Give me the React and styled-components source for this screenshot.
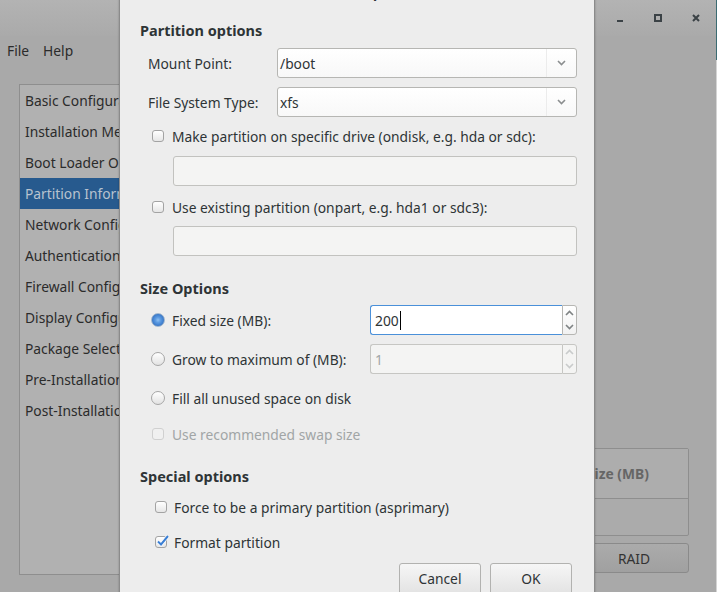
import React from 'react';
import styled, { createGlobalStyle } from 'styled-components';

const GlobalStyle = createGlobalStyle`
  html, body {
    margin: 0;
    padding: 0;
  }
  body {
    font-family: "Noto Sans", "DejaVu Sans", sans-serif;
    font-size: 13.8px;
    color: #2e3436;
  }
`;

const Screen = styled.div`
  position: relative;
  width: 717px;
  height: 592px;
  overflow: hidden;
  display: flex;
  background: #dcdcdc;
`;

const MainWindow = styled.div`
  width: 716px;
  height: 100%;
  display: flex;
  flex-direction: column;
  background: #a9a9a9;
  color: #2b2b2b;
`;

const DesktopEdge = styled.div`
  flex: 1;
  background: linear-gradient(#3b6b72 0, #3b6b72 60px, #d4d4d4 60px);
`;

const TitleBar = styled.div`
  height: 36px;
  display: flex;
  justify-content: flex-end;
  padding-right: 1px;
  background: linear-gradient(#b3b3b3, #aaaaaa);
`;

const WinControl = styled.div`
  width: 38px;
  height: 36px;
  display: flex;
  align-items: center;
  justify-content: center;
  svg {
    display: block;
  }
`;

const MenuBar = styled.div`
  height: 30px;
  display: flex;
  align-items: center;
`;

const MenuItem = styled.span`
  padding: 0 7px;
  line-height: 30px;
`;

const Body = styled.div`
  flex: 1;
  display: flex;
  gap: 12px;
  padding: 18px 27px 17px 19px;
  min-height: 0;
`;

const Sidebar = styled.div`
  width: 102px;
  border: 1px solid #8e8e8e;
  border-right: none;
  background: #b1b1b1;
  display: flex;
  flex-direction: column;
  overflow: hidden;
`;

const SideItem = styled.div`
  height: 31px;
  line-height: 31px;
  padding-left: 5px;
  white-space: nowrap;
  overflow: hidden;
  background: ${p => (p.$active ? '#275a8e' : 'transparent')};
  color: ${p => (p.$active ? '#b8c3d0' : '#2b2b2b')};
`;

const MainPane = styled.div`
  flex: 1;
  display: flex;
  flex-direction: column;
  justify-content: flex-end;
  padding-bottom: 2px;
`;

const Table = styled.div`
  border: 1px solid #8e8e8e;
  border-radius: 2px;
  background: #ababab;
`;

const TableHead = styled.div`
  height: 49px;
  display: grid;
  grid-template-columns: 1fr 1fr 80px 80px 110px;
  border-bottom: 1px solid #8e8e8e;
  background: #adadad;
`;

const HeadCell = styled.div`
  display: flex;
  align-items: center;
  padding-left: 9px;
  font-weight: bold;
  color: #666666;
  white-space: nowrap;
  overflow: hidden;
`;

const TableRow = styled.div`
  height: 36px;
`;

const ButtonRow = styled.div`
  display: flex;
  justify-content: flex-end;
  margin-top: 7px;
`;

const DimButton = styled.div`
  width: 110px;
  height: 30px;
  box-sizing: border-box;
  border: 1px solid #8a8a8a;
  border-radius: 3px;
  background: linear-gradient(#ababab, #a0a0a0);
  display: flex;
  align-items: center;
  justify-content: center;
  color: #333333;
`;

/* dialog */

const Dialog = styled.div`
  position: absolute;
  left: 119px;
  top: -24px;
  width: 476px;
  height: 640px;
  box-sizing: border-box;
  border-left: 1px solid #8b8b8b;
  border-right: 1px solid #8b8b8b;
  background: #ededed;
  box-shadow: 0 0 2px rgba(0, 0, 0, 0.25);
  display: flex;
  flex-direction: column;
`;

const DialogTitle = styled.div`
  height: 24px;
  display: flex;
  align-items: flex-end;
  justify-content: center;
  font-weight: bold;
  line-height: 1;
  color: #2e3436;
`;

const DialogBody = styled.div`
  display: flex;
  flex-direction: column;
  padding: 21px 17px 0 20px;
`;

const Heading = styled.div`
  font-weight: bold;
  font-size: 14.5px;
  line-height: 18px;
  margin-top: ${p => p.$gap || 0}px;
`;

const FieldRow = styled.div`
  display: grid;
  grid-template-columns: 129px 1fr;
  align-items: center;
  padding-left: 8px;
  margin-top: ${p => p.$gap || 0}px;
`;

const Label = styled.span`
  white-space: nowrap;
  color: ${p => (p.$disabled ? '#a1a5a6' : '#2e3436')};
`;

const Combo = styled.div`
  height: 30px;
  box-sizing: border-box;
  border: 1px solid #b6b6b3;
  border-radius: 3px;
  background: linear-gradient(#ffffff, #f8f8f8);
  display: flex;
  align-items: center;
`;

const ComboText = styled.span`
  flex: 1;
  padding-left: 2px;
`;

const ComboArrow = styled.div`
  width: 29px;
  height: 100%;
  border-left: 1px solid #ececec;
  display: flex;
  align-items: center;
  justify-content: center;
`;

const CheckRow = styled.div`
  display: flex;
  align-items: center;
  gap: ${p => p.$labelGap || 8}px;
  height: 18px;
  padding-left: ${p => p.$indent || 12}px;
  margin-top: ${p => p.$gap || 0}px;
`;

const Box = styled.div`
  position: relative;
  width: 12px;
  height: 12px;
  box-sizing: border-box;
  border: 1px solid ${p => (p.$disabled ? '#d0d0d0' : '#a3a3a3')};
  border-radius: 3px;
  background: ${p => (p.$disabled ? '#f0f0f0' : 'linear-gradient(#ffffff, #e6e6e6)')};
  flex: none;
  svg {
    position: absolute;
    left: 0;
    top: -3px;
  }
`;

const Entry = styled.div`
  height: 30px;
  box-sizing: border-box;
  margin-left: 33px;
  margin-top: ${p => p.$gap || 0}px;
  border: 1px solid #c2c2bf;
  border-radius: 3px;
  background: #f4f4f3;
`;

const RadioRow = styled.div`
  display: grid;
  grid-template-columns: 230px 1fr;
  align-items: center;
  height: 30px;
  margin-top: ${p => p.$gap || 0}px;
`;

const RadioLabel = styled.div`
  display: flex;
  align-items: center;
  gap: 7px;
  padding-left: 11px;
`;

const Radio = styled.div`
  width: 14px;
  height: 14px;
  box-sizing: border-box;
  border-radius: 50%;
  flex: none;
  border: 1px solid ${p => (p.$checked ? '#9fb6cf' : '#a6a6a6')};
  background: ${p =>
    p.$checked
      ? 'radial-gradient(circle at 50% 50%, #8fc0f2 0, #5e9ce2 30%, #3f7fcf 62%, #3169b2 80%, #c9d2dc 100%)'
      : 'linear-gradient(#ffffff, #e2e2e2)'};
`;

const Spin = styled.div`
  display: flex;
  height: 30px;
`;

const SpinInput = styled.div`
  flex: 1;
  box-sizing: border-box;
  display: flex;
  align-items: center;
  padding-left: 4px;
  border: 1px solid ${p => (p.$focused ? '#4a90d9' : '#c6c6c3')};
  border-right: none;
  border-radius: 3px 0 0 3px;
  background: ${p => (p.$disabled ? '#f4f4f3' : '#ffffff')};
  color: ${p => (p.$disabled ? '#a1a5a6' : '#2e3436')};
`;

const Caret = styled.span`
  display: inline-block;
  width: 1px;
  height: 19px;
  margin-left: 1px;
  background: #000000;
`;

const SpinButtons = styled.div`
  width: 15px;
  box-sizing: border-box;
  border: 1px solid ${p => (p.$disabled ? '#c6c6c3' : '#b6b6b3')};
  border-radius: 0 3px 3px 0;
  background: ${p => (p.$disabled ? '#f4f4f3' : 'linear-gradient(#ffffff, #f2f2f2)')};
  display: flex;
  flex-direction: column;
  align-items: center;
  justify-content: space-around;
`;

const Footer = styled.div`
  display: flex;
  justify-content: flex-end;
  gap: 9px;
  padding-right: 5px;
  margin-top: 12px;
`;

const DialogButton = styled.button`
  width: 82px;
  height: 33px;
  border: 1px solid #b2b2b0;
  border-radius: 3px;
  background: linear-gradient(#f6f6f6, #e2e2e2);
  font: inherit;
  color: #2e3436;
  padding: 0 0 2px;
`;

const Chevron = ({ up, color = '#8b8e8f' }) => (
  <svg width="9" height="6" viewBox="0 0 9 6">
    <path
      d={up ? 'M1 5 L4.5 1.5 L8 5' : 'M1 1 L4.5 4.5 L8 1'}
      fill="none"
      stroke={color}
      strokeWidth="1.6"
    />
  </svg>
);

const Check = ({ label, checked, disabled, indent, labelGap, gap }) => (
  <CheckRow $indent={indent} $labelGap={labelGap} $gap={gap}>
    <Box $disabled={disabled}>
      {checked && (
        <svg width="14" height="13" viewBox="0 0 14 13">
          <path d="M2 7.5 L5 10.5 L12 2" fill="none" stroke="#ffffff" strokeWidth="3.4" />
          <path d="M2 7.5 L5 10.5 L12 2" fill="none" stroke="#3b7fd4" strokeWidth="2" />
        </svg>
      )}
    </Box>
    <Label $disabled={disabled}>{label}</Label>
  </CheckRow>
);

const sideItems = [
  'Basic Configuration',
  'Installation Method',
  'Boot Loader Options',
  'Partition Information',
  'Network Configuration',
  'Authentication',
  'Firewall Configuration',
  'Display Configuration',
  'Package Selection',
  'Pre-Installation Script',
  'Post-Installation Script',
];

export default function App() {
  return (
    <>
      <GlobalStyle />
      <Screen>
        <MainWindow>
          <TitleBar>
            <WinControl>
              <svg width="8" height="8" viewBox="0 0 8 8">
                <rect x="1" y="6" width="6" height="2" fill="#3b4246" />
              </svg>
            </WinControl>
            <WinControl>
              <svg width="8" height="8" viewBox="0 0 8 8">
                <rect x="1" y="1" width="6" height="6" fill="none" stroke="#3b4246" strokeWidth="2" />
              </svg>
            </WinControl>
            <WinControl>
              <svg width="8" height="8" viewBox="0 0 8 8">
                <path d="M1 1 L7 7 M7 1 L1 7" stroke="#3b4246" strokeWidth="2" />
              </svg>
            </WinControl>
          </TitleBar>
          <MenuBar>
            <MenuItem>File</MenuItem>
            <MenuItem>Help</MenuItem>
          </MenuBar>
          <Body>
            <Sidebar>
              {sideItems.map(item => (
                <SideItem key={item} $active={item === 'Partition Information'}>
                  {item}
                </SideItem>
              ))}
            </Sidebar>
            <MainPane>
              <Table>
                <TableHead>
                  <HeadCell>Device</HeadCell>
                  <HeadCell>Mount Point</HeadCell>
                  <HeadCell>Type</HeadCell>
                  <HeadCell>Format</HeadCell>
                  <HeadCell>Size (MB)</HeadCell>
                </TableHead>
                <TableRow />
              </Table>
              <ButtonRow>
                <DimButton>RAID</DimButton>
              </ButtonRow>
            </MainPane>
          </Body>
        </MainWindow>
        <DesktopEdge />

        <Dialog>
          <DialogTitle>Partition Options</DialogTitle>
          <DialogBody>
            <Heading>Partition options</Heading>
            <FieldRow $gap={9}>
              <Label>Mount Point:</Label>
              <Combo>
                <ComboText>/boot</ComboText>
                <ComboArrow>
                  <Chevron />
                </ComboArrow>
              </Combo>
            </FieldRow>
            <FieldRow $gap={9}>
              <Label>File System Type:</Label>
              <Combo>
                <ComboText>xfs</ComboText>
                <ComboArrow>
                  <Chevron />
                </ComboArrow>
              </Combo>
            </FieldRow>
            <Check gap={10} label="Make partition on specific drive (ondisk, e.g. hda or sdc):" />
            <Entry $gap={11} />
            <Check gap={12} label="Use existing partition (onpart, e.g. hda1 or sdc3):" />
            <Entry $gap={10} />

            <Heading $gap={23}>Size Options</Heading>
            <RadioRow $gap={8}>
              <RadioLabel>
                <Radio $checked />
                <Label>Fixed size (MB):</Label>
              </RadioLabel>
              <Spin>
                <SpinInput $focused>
                  200
                  <Caret />
                </SpinInput>
                <SpinButtons>
                  <Chevron up color="#7f8384" />
                  <Chevron color="#7f8384" />
                </SpinButtons>
              </Spin>
            </RadioRow>
            <RadioRow $gap={9}>
              <RadioLabel>
                <Radio />
                <Label>Grow to maximum of (MB):</Label>
              </RadioLabel>
              <Spin>
                <SpinInput $disabled>1</SpinInput>
                <SpinButtons $disabled>
                  <Chevron up color="#c9cbcb" />
                  <Chevron color="#c9cbcb" />
                </SpinButtons>
              </Spin>
            </RadioRow>
            <RadioRow $gap={9}>
              <RadioLabel>
                <Radio />
                <Label>Fill all unused space on disk</Label>
              </RadioLabel>
            </RadioRow>
            <Check gap={12} disabled label="Use recommended swap size" />

            <Heading $gap={24}>Special options</Heading>
            <Check gap={13} indent={15} labelGap={7} label="Force to be a primary partition (asprimary)" />
            <Check gap={17} indent={15} labelGap={7} checked label="Format partition" />

            <Footer>
              <DialogButton>Cancel</DialogButton>
              <DialogButton>OK</DialogButton>
            </Footer>
          </DialogBody>
        </Dialog>
      </Screen>
    </>
  );
}
